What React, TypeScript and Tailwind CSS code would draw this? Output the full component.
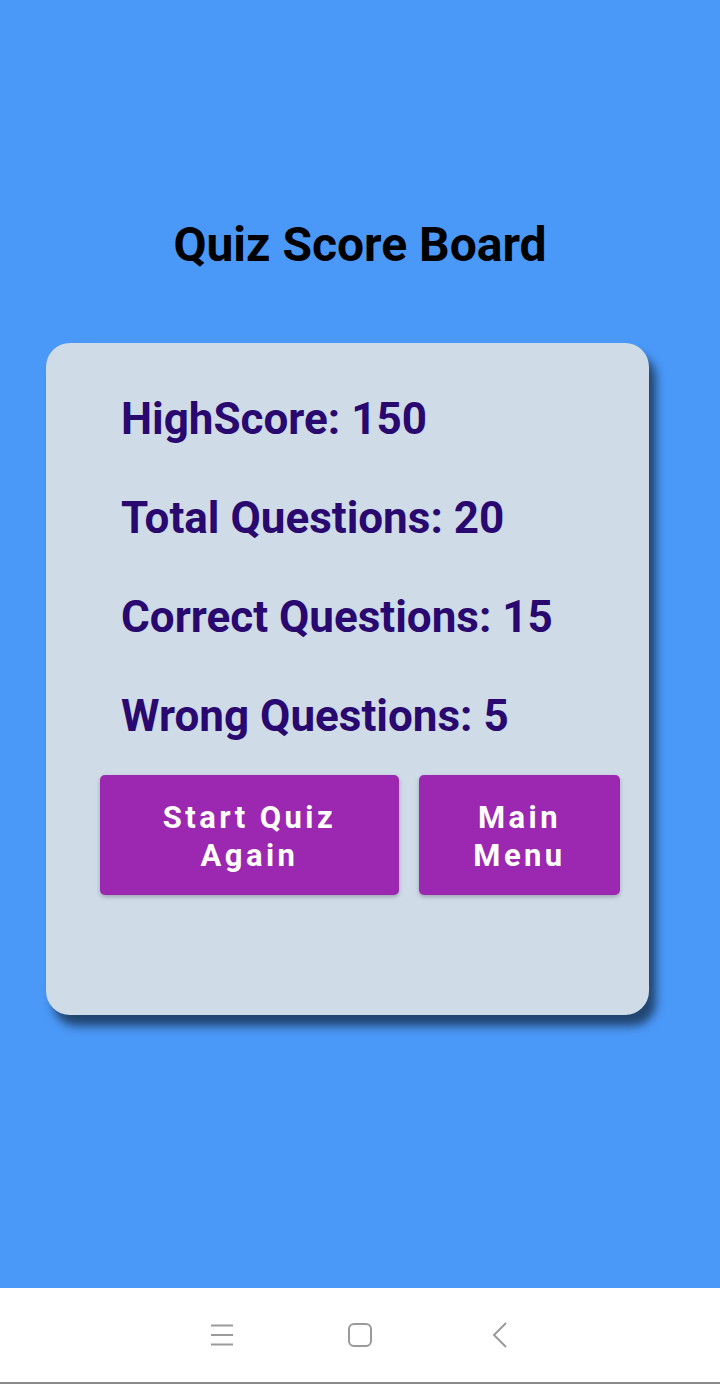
const stats = [
  { label: "HighScore", value: 150 },
  { label: "Total Questions", value: 20 },
  { label: "Correct Questions", value: 15 },
  { label: "Wrong Questions", value: 5 },
];

const NavBar = () => (
  <div className="h-[96px] bg-white border-b-2 border-[#8a8a8a] flex items-center justify-center gap-[114px]">
    <svg width="26" height="26" viewBox="0 0 26 26" fill="none" stroke="#9a9a9a" strokeWidth="2">
      <path d="M4 3.5h23M4 13h23M4 22.5h23" />
    </svg>
    <svg width="26" height="26" viewBox="0 0 26 26" fill="none" stroke="#9a9a9a" strokeWidth="2">
      <rect x="2" y="2" width="22" height="22" rx="5" />
    </svg>
    <svg width="26" height="26" viewBox="0 0 26 26" fill="none" stroke="#9a9a9a" strokeWidth="2">
      <path d="M19 1L7 13l12 12" />
    </svg>
  </div>
);

const App = () => {
  return (
    <div className="h-[1384px] flex flex-col font-['Roboto',sans-serif]">
      <div className="h-[1288px] bg-[#4a98f8] flex flex-col">
        <h1 className="pt-[217px] text-center text-[48px] leading-[55px] font-bold text-black">
          Quiz Score Board
        </h1>
        <div className="mt-[71px] ml-[46px] w-[603px] h-[672px] bg-[#cfdce8] rounded-[24px] shadow-[7px_11px_10px_rgba(0,0,0,0.55)] pt-[50px]">
          <div className="flex flex-col gap-[46px] pl-[75px]">
            {stats.map((s) => (
              <div key={s.label} className="text-[44px] leading-[53px] font-bold text-[#290870]">
                {s.label}: {s.value}
              </div>
            ))}
          </div>
          <div className="flex gap-[20px] pl-[54px] mt-[32px]">
            <button className="w-[299px] h-[120px] bg-[#9c27b0] rounded-[5px] shadow-[0_2px_4px_rgba(0,0,0,0.25)] text-white font-bold text-[31px] leading-[38px] tracking-[0.11em] pt-[4px]">
              Start Quiz
              <br />
              Again
            </button>
            <button className="w-[201px] h-[120px] bg-[#9c27b0] rounded-[5px] shadow-[0_2px_4px_rgba(0,0,0,0.25)] text-white font-bold text-[31px] leading-[38px] tracking-[0.11em] pt-[4px]">
              Main
              <br />
              Menu
            </button>
          </div>
        </div>
      </div>
      <NavBar />
    </div>
  );
};

export default App;
